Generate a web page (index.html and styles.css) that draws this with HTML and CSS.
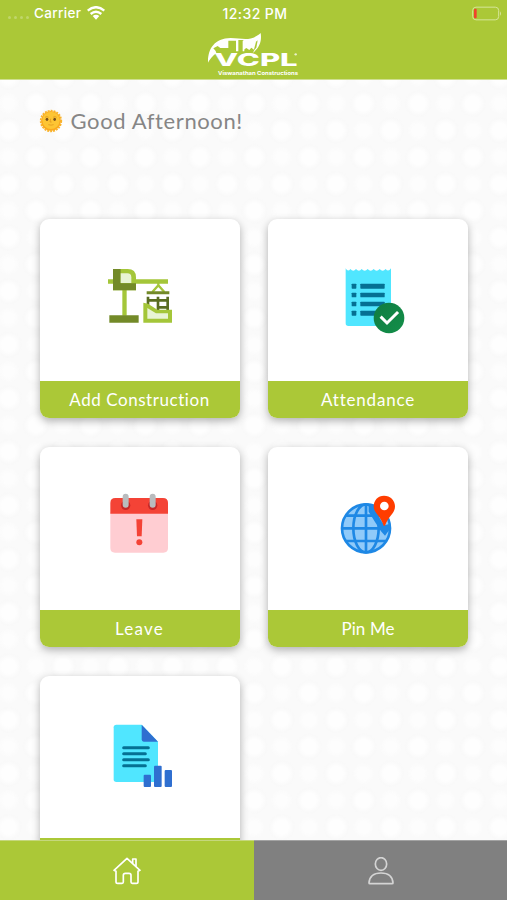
FILE: index.html
```html
<!DOCTYPE html>
<html lang="en">
  <head>
    <meta charset="UTF-8" />
    <meta name="viewport" content="width=device-width, initial-scale=1.0" />
    <title>VCPL</title>
    <link rel="stylesheet" href="styles.css">
  </head>
  <body>
    <header class="header">
      <div class="status-bar">
        <div class="carrier">
          <span class="signal"><i></i><i></i><i></i><i></i></span>
          <span class="carrier-name">Carrier</span>
          <svg class="wifi" viewBox="0 0 54 42" width="18" height="14">
            <g fill="none" stroke="#fff" stroke-width="7">
              <path d="M2 14Q27-7 52 14" />
              <path d="M11 24Q27 10 43 24" />
            </g>
            <path d="M17 30Q27 22 37 30L27 41Z" fill="#fff" />
          </svg>
        </div>
        <div class="time">12:32 PM</div>
        <div class="power">
          <svg viewBox="0 0 90 44" width="30" height="15">
            <rect x="2" y="3" width="78" height="38" rx="10" fill="none" stroke="#d6e59a" stroke-width="3" />
            <path d="M84 15Q90 22 84 29Z" fill="#d6e59a" />
            <rect x="6" y="8" width="8" height="28" rx="3" fill="#f0422c" />
          </svg>
        </div>
      </div>
      <svg class="logo" viewBox="0 0 390 168" width="130" height="56">
        <path fill="#fff" d="M57 110C56 70 75 37 125 36C160 36 185 48 215 21C219 46 211 66 190 82H85C75 84 66 96 57 110Z" />
        <path fill="#abc837" d="M73 67L86 60L94 66H118V44H142V67H147V42H163V72L172 66L181 72L187 65L196 72L190 84H83L80 75Z" />
        <path fill="#fff" d="M141 42H148V76H141ZM161 44H166V76H161Z" />
        <path fill="#abc837" d="M201 47L206 43L202 65L194 74Z" />
        <text class="logo-name" x="76" y="119" textLength="250" lengthAdjust="spacingAndGlyphs">VCPL</text>
        <text class="logo-sub" x="87" y="147" textLength="240" lengthAdjust="spacingAndGlyphs">Viswanathan Constructions</text>
        <circle cx="320" cy="85" r="3.5" fill="#e9f1cb" />
      </svg>
    </header>

    <main class="content">
      <div class="greeting">
        <svg viewBox="0 0 72 72" width="24" height="24">
          <circle cx="36" cy="36" r="31" fill="none" stroke="#f9b52c" stroke-width="5" stroke-dasharray="6 3" />
          <circle cx="36" cy="36" r="30" fill="#fba91f" />
          <circle cx="36" cy="34" r="26" fill="#fdc534" />
          <g fill="#79501c">
            <ellipse cx="24" cy="31" rx="4" ry="5" />
            <ellipse cx="47" cy="31" rx="4" ry="5" />
          </g>
          <path d="M18 25Q23 20 29 25M42 25Q48 20 53 25M35 29L33 39H38M28 47Q36 50 44 47" fill="none" stroke="#e29a20" stroke-width="2.5" />
        </svg>
        <span class="greeting-text">Good Afternoon!</span>
      </div>

      <div class="cards">
        <div class="card">
          <div class="card-icon">
            <svg viewBox="0 0 270 270" width="90" height="90">
              <path d="M39 73H219V86H39Z" fill="#a4c639" />
              <path d="M82 100H95V182H82Z" fill="#a4c639" />
              <path d="M54 42H98Q123 42 123 67V106H54Z" fill="#a4c639" />
              <path d="M54 42H77V85H123V106H54Z" fill="#738a28" />
              <path d="M77 55H97Q109 55 109 67V84H77Z" fill="#e8f4d4" />
              <path d="M43 181H131V203H43Z" fill="#738a28" />
              <path d="M190 84V91L172 111M190 91L208 111" fill="none" stroke="#a4c639" stroke-width="7" />
              <path d="M155 109H223V118H155Z" fill="#738a28" />
              <path d="M159 125V150M189 125V166M218 125V166M155 136H222M185 157H218" fill="none" stroke="#596d21" stroke-width="8" />
              <path d="M145 143L159 146L187 164H231V203H145Z" fill="#a4c639" />
              <path d="M157 159L183 175H219V191H157Z" fill="#e8f4d4" />
            </svg>
          </div>
          <div class="card-label label-construction">Add Construction</div>
        </div>

        <div class="card">
          <div class="card-icon">
            <svg viewBox="-22 0 270 270" width="90" height="90">
              <path d="M46 40Q53 52 60 42Q69 53 77 42Q86 53 94 42Q103 53 112 42Q121 53 130 42Q139 53 148 42Q157 53 166 42Q174 52 182 40V213H54Q46 213 46 205Z" fill="#50e6ff" />
              <g fill="#057093">
                <rect x="64" y="86" width="14" height="15" rx="2" />
                <rect x="64" y="113" width="14" height="14" rx="2" />
                <rect x="64" y="140" width="14" height="14" rx="2" />
                <rect x="64" y="167" width="14" height="15" rx="2" />
                <rect x="90" y="86" width="73" height="15" rx="2" />
                <rect x="90" y="113" width="73" height="14" rx="2" />
                <rect x="90" y="140" width="73" height="14" rx="2" />
                <rect x="90" y="167" width="60" height="15" rx="2" />
              </g>
              <defs>
                <linearGradient id="check" x1="0" y1="0" x2="1" y2="1">
                  <stop offset="0" stop-color="#107c42" />
                  <stop offset="1" stop-color="#138f49" />
                </linearGradient>
              </defs>
              <circle cx="176" cy="189" r="46" fill="url(#check)" />
              <path d="M154 188L170 204L200 174" fill="none" stroke="#fff" stroke-width="9" stroke-linecap="square" />
            </svg>
          </div>
          <div class="card-label label-attendance">Attendance</div>
        </div>

        <div class="card">
          <div class="card-icon">
            <svg viewBox="0 10 270 270" width="90" height="90">
              <path d="M46 98H219V205Q219 219 205 219H60Q46 219 46 205Z" fill="#ffcdd2" />
              <path d="M46 102V70Q46 55 61 55H204Q219 55 219 70V102Z" fill="#f44336" />
              <circle cx="92" cy="77" r="14" fill="#c62828" />
              <circle cx="173" cy="77" r="14" fill="#c62828" />
              <path d="M92 51V75M173 51V75" stroke="#b9bcbe" stroke-width="18" stroke-linecap="round" />
              <path d="M124 119H142L140 170H126Z" fill="#f44336" />
              <circle cx="133" cy="188" r="9" fill="#f44336" />
            </svg>
          </div>
          <div class="card-label label-leave">Leave</div>
        </div>

        <div class="card">
          <div class="card-icon">
            <svg viewBox="-5 10 270 270" width="90" height="90">
              <circle cx="124" cy="146" r="73" fill="#90caf9" />
              <g fill="none" stroke="#1e88e5" stroke-width="8">
                <circle cx="124" cy="146" r="72" />
                <ellipse cx="124" cy="146" rx="38" ry="72" />
                <path d="M124 74V218M53 146H195M64 108H184M64 184H184" />
              </g>
              <path d="M132 74Q141 70 151 80Q160 112 179 137L197 132Q198 151 192 153L181 168L169 155Q151 127 132 96Z" fill="#1e88e5" />
              <path d="M178 48C197 48 211 62 211 80C211 102 192 107 181 138H177C167 107 147 100 147 80C147 62 160 48 178 48Z" fill="#ff3d00" />
              <circle cx="179" cy="79" r="13" fill="#fff" />
            </svg>
          </div>
          <div class="card-label label-pin">Pin Me</div>
        </div>

        <div class="card">
          <div class="card-icon">
            <svg viewBox="-14 6 270 270" width="90" height="90">
              <path d="M50 44H126L175 95V216H50Q42 216 42 208V52Q42 44 50 44Z" fill="#50e6ff" />
              <path d="M126 44L175 95H132Q126 95 126 88Z" fill="#2f6fd0" />
              <path d="M72 113H146M72 131H137M72 149H146M72 167H137" stroke="#057093" stroke-width="9" stroke-linecap="round" />
              <g fill="#2f6fd0">
                <rect x="132" y="194" width="22" height="37" rx="3" />
                <rect x="163" y="167" width="23" height="64" rx="3" />
                <rect x="195" y="180" width="22" height="51" rx="3" />
              </g>
            </svg>
          </div>
          <div class="card-label"></div>
        </div>
      </div>
    </main>

    <nav class="tabs">
      <a class="tab tab-active">
        <svg viewBox="0 0 84 84" width="28" height="28">
          <g fill="none" stroke="#fff" stroke-width="5" stroke-linejoin="round" stroke-linecap="round">
            <path d="M3 40L42 4L81 40L75 43V74Q75 79 70 79H58Q54 79 54 75V55Q54 49 48 49H37Q31 49 31 55V75Q31 79 27 79H14Q9 79 9 74V43Z" />
            <path d="M59 18V6H69V27" />
          </g>
        </svg>
      </a>
      <a class="tab">
        <svg viewBox="0 0 84 84" width="28" height="28">
          <g fill="none" stroke="#d4d4d4" stroke-width="5" stroke-linejoin="round">
            <ellipse cx="42" cy="21" rx="17" ry="19" />
            <path d="M6 78Q8 48 42 48Q76 48 78 78Q78 80 75 80H9Q6 80 6 78Z" />
          </g>
        </svg>
      </a>
    </nav>
  </body>
</html>
```

FILE: styles.css
```css
* {
  box-sizing: border-box;
}
body {
  margin: 0;
  height: 900px;
  overflow: hidden;
  display: flex;
  flex-direction: column;
  font-family: Lato, sans-serif;
}

/* header */
.header {
  height: 80px;
  flex: none;
  overflow: hidden;
  background-color: #abc837;
  border-bottom: 1px solid #cfdf90;
  display: flex;
  flex-direction: column;
  align-items: center;
}
.status-bar {
  width: 100%;
  height: 26px;
  flex: none;
  padding: 0 5px 0 8px;
  display: grid;
  grid-template-columns: 1fr auto 1fr;
  align-items: center;
  color: white;
  font-family: Inter, sans-serif;
  font-size: 13.5px;
  font-weight: 500;
}
.carrier {
  display: flex;
  align-items: center;
}
.signal {
  display: flex;
  gap: 3px;
  width: 26px;
  padding-top: 9px;
}
.signal i {
  width: 3px;
  height: 3px;
  border-radius: 50%;
  background-color: #c0d66b;
}
.wifi {
  margin-left: 6px;
}
.carrier-name {
  letter-spacing: 0.35px;
}
.time {
  font-size: 14px;
  letter-spacing: 0.4px;
}
.power {
  display: flex;
  justify-content: flex-end;
}
.logo {
  flex: none;
}
.logo-name {
  font-family: Inter, sans-serif;
  font-weight: 800;
  font-size: 54px;
  fill: white;
}
.logo-sub {
  font-family: Inter, sans-serif;
  font-weight: bold;
  font-size: 16px;
  fill: white;
}

/* content */
.content {
  flex: 1;
  overflow: hidden;
  padding: 28px 39.5px 0;
  background-color: #fafafa;
  background-image:
    radial-gradient(ellipse 14px 14px at 13.6px 13.4px, #fefefe 50%, #f9f9f9 88%, transparent 100%),
    radial-gradient(ellipse 14px 14px at 41px 40.2px, #fefefe 50%, #f9f9f9 88%, transparent 100%),
    radial-gradient(circle 11px at 13.6px 40.2px, #fdfdfd 50%, transparent 100%),
    radial-gradient(circle 11px at 41px 13.4px, #fdfdfd 50%, transparent 100%);
  background-size: 54.6px 53.6px;
  background-position: -5px 37px;
}
.greeting {
  display: flex;
  align-items: center;
  gap: 8px;
  height: 26px;
  margin-left: -1px;
}
.greeting-text {
  color: #868686;
  font-size: 22px;
  line-height: 24px;
  letter-spacing: 0.62px;
  padding-bottom: 1px;
}
.cards {
  margin-top: 84.5px;
  display: grid;
  grid-template-columns: 200px 200px;
  gap: 29px 28.5px;
}
.card {
  height: 199.5px;
  display: flex;
  flex-direction: column;
  background-color: white;
  border-radius: 9px;
  overflow: hidden;
  box-shadow: 0 3px 9px rgba(0, 0, 0, 0.3);
}
.card-icon {
  flex: 1;
  display: flex;
  align-items: center;
  justify-content: center;
}
.card-label {
  height: 37px;
  background-color: #abc837;
  color: white;
  font-size: 17px;
  line-height: 38px;
  text-align: center;
}
.label-construction {
  letter-spacing: 0.55px;
}
.label-attendance {
  letter-spacing: 0.8px;
}
.label-leave {
  letter-spacing: 1.2px;
}
.label-pin {
  letter-spacing: 0.1px;
}

/* bottom tabs */
.tabs {
  height: 60px;
  flex: none;
  display: grid;
  grid-template-columns: 254px 1fr;
}
.tab {
  display: flex;
  align-items: center;
  justify-content: center;
  background-color: #808080;
  border-top: 1px solid #a3a3a3;
}
.tab-active {
  background-color: #abc837;
  border-top-color: #c5d77c;
}
```
